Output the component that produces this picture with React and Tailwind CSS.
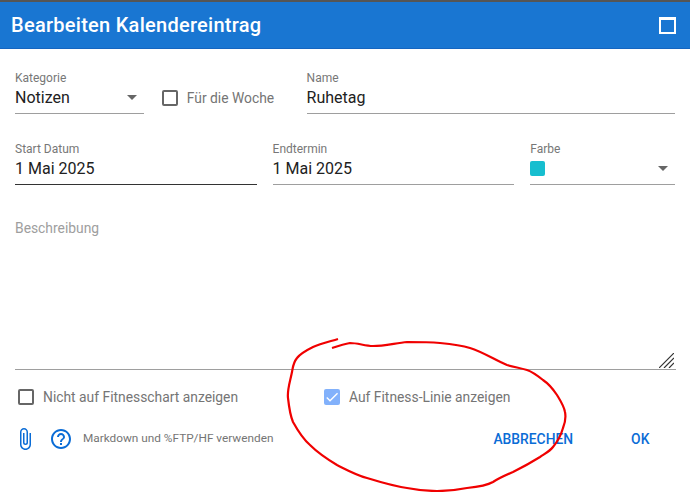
import { MdArrowDropDown, MdAttachFile, MdCheck, MdHelpOutline } from "react-icons/md";

function Field({ label, className, dark, children }) {
  return (
    <div className={`${className} border-b ${dark ? "border-[#333]" : "border-[#9e9e9e]"} h-[44px]`}>
      <div className="h-[15px] pt-[1px] text-[12px] leading-[14px] text-[#777]">{label}</div>
      <div className="relative flex h-[28px] items-center pb-[3px] text-[16px] text-[#212121]">{children}</div>
    </div>
  );
}

function Caret() {
  return <MdArrowDropDown className="absolute right-0 top-0 text-[24px] text-[#666]" />;
}

function Checkbox({ checked, label, className }) {
  return (
    <label className={`flex items-center text-[13.85px] leading-[16px] text-[#757575] ${className}`}>
      {checked ? (
        <span className="flex h-4 w-4 items-center justify-center rounded-[2px] bg-[#82b1fb] text-[16px] text-white">
          <MdCheck />
        </span>
      ) : (
        <span className="h-4 w-4 rounded-[2px] border-2 border-[#666]" />
      )}
      <span className="ml-[9px] whitespace-nowrap">{label}</span>
    </label>
  );
}

export default function App() {
  return (
    <div className="relative h-[492px] w-[690px] overflow-hidden bg-white font-['Roboto',sans-serif]">
      <div className="h-[2px] bg-[#555]" />
      <header className="flex h-[47px] items-center justify-between border-b border-[#1565c0] bg-[#1976d2] pl-[11px] pr-[14px] text-white">
        <h1 className="text-[20px] font-medium leading-none tracking-[0.27px]">Bearbeiten Kalendereintrag</h1>
        <div className="h-[17px] w-[17px] border-2 border-t-[3px] border-white" />
      </header>

      <div className="px-[15px] pt-[21px]">
        <div className="flex items-center">
          <Field label="Kategorie" className="w-[129px]">
            Notizen
            <Caret />
          </Field>
          <Checkbox label="Für die Woche" className="ml-[18px] w-[145px] pt-[12px]" />
          <Field label="Name" className="w-[369px]">
            Ruhetag
          </Field>
        </div>

        <div className="mt-[27px] flex">
          <Field label="Start Datum" dark className="w-[242px]">
            1 Mai 2025
          </Field>
          <Field label="Endtermin" className="ml-[16px] w-[242px]">
            1 Mai 2025
          </Field>
          <Field label="Farbe" className="ml-[16px] w-[145px]">
            <span className="h-[15px] w-[15px] rounded-[2px] bg-[#17becf]" />
            <Caret />
          </Field>
        </div>

        <div className="relative mt-[33px] h-[152px] w-[661px] border-b border-[#9e9e9e] pt-[2px] text-[13.85px] leading-[16px] text-[#9e9e9e]">
          Beschreibung
          <svg className="absolute bottom-[1px] right-[2px]" width="15" height="15" viewBox="0 0 15 15" fill="none" stroke="#333" strokeWidth="1.2">
            <path d="M0 15L15 0M5 15L15 5M10 15L15 10" />
          </svg>
        </div>

        <div className="mt-[19px] flex items-center pl-[3px]">
          <Checkbox label="Nicht auf Fitnesschart anzeigen" className="w-[306px]" />
          <Checkbox checked label="Auf Fitness-Linie anzeigen" />
        </div>

        <div className="mt-[22px] flex h-[24px] items-center text-[#0a6cd6]">
          <MdAttachFile className="-ml-[2px] text-[24px]" />
          <MdHelpOutline className="ml-[12px] text-[24px]" />
          <span className="ml-[10px] text-[11.8px] text-[#757575]">Markdown und %FTP/HF verwenden</span>
          <button className="ml-[220px] text-[13.85px] font-medium">ABBRECHEN</button>
          <button className="ml-[58px] text-[13.85px] font-medium">OK</button>
        </div>
      </div>

      {/* annotation drawn over the screenshot */}
      <svg className="pointer-events-none absolute inset-0" width="690" height="492" fill="none" stroke="#f00000" strokeWidth="2.2">
        <path d="M338 339C328 342 320 344 313 347C305 351 300 354 297 358C293 363 293 367 292 372C290 382 287 390 288 398C289 407 290 415 293 422C298 431 303 439 310 445C318 453 327 459 337 465C347 470 356 475 367 478C380 482 393 486 407 488C417 490 427 491 437 491C447 491 457 490 467 488C477 487 486 486 493 482C499 478 506 475 513 472C523 467 532 462 540 457C546 453 550 451 553 447C558 441 561 435 563 428C565 423 566 417 565 412C564 406 560 400 557 395C553 389 549 384 543 380C538 376 533 372 527 370C520 368 514 367 507 365C495 360 483 352 470 348C460 345 450 344 440 343C429 342 418 342 407 342C396 343 384 346 373 346C365 346 358 343 350 343C344 344 338 346 332 348" />
      </svg>
    </div>
  );
}
